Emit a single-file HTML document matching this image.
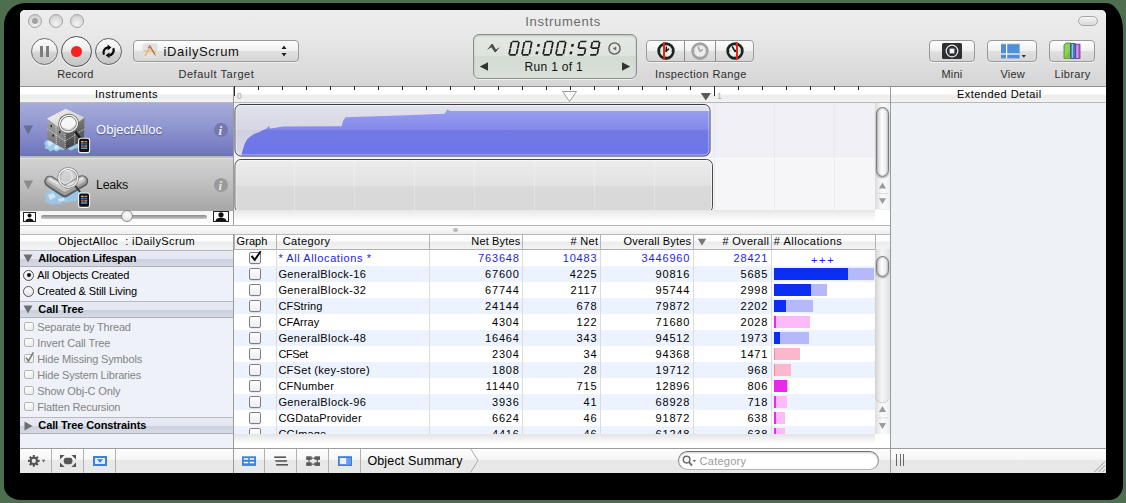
<!DOCTYPE html>
<html>
<head>
<meta charset="utf-8">
<title>Instruments</title>
<style>
html,body{margin:0;padding:0;}
body{width:1126px;height:503px;overflow:hidden;background:#4e6e50;font-family:"Liberation Sans",sans-serif;font-size:11px;color:#000;position:relative;}
.abs,.t,#pg,#pg div,#pg svg,#pg span{position:absolute;}
#shadow{left:4px;top:3px;width:1119px;height:497px;background:#000;border-radius:21px 17px 13px 17px / 22px 27px 15px 14px;}
#win{left:20px;top:10px;width:1086px;height:463px;background:#eef1f6;border-radius:5px 5px 0 0;overflow:hidden;}
#pg{left:-20px;top:-10px;width:1126px;height:503px;}
#tbar{left:20px;top:10px;width:1086px;height:76px;background:linear-gradient(#ededed 0%,#e9e9e9 30%,#e0e0e0 62%,#d5d5d5 100%);}
.t{white-space:nowrap;line-height:1;}
.lbl{font-size:11px;color:#2e2e2e;}
.tl{width:12px;height:12px;border-radius:50%;border:1px solid #a4a4a4;background:radial-gradient(circle at 50% 75%,#f4f4f4 0%,#dcdcdc 55%,#c4c4c4 100%);box-sizing:content-box;}
.rbtn{border-radius:50%;border:1px solid #6e6e6e;background:linear-gradient(#fdfdfd 0%,#ededed 45%,#d4d4d4 55%,#c6c6c6 100%);box-sizing:border-box;box-shadow:0 1px 0 rgba(255,255,255,.6);}
.sbtn{border:1px solid #9a9a9a;border-radius:4px;background:linear-gradient(#fefefe 0%,#f0f0f0 48%,#e0e0e0 52%,#d6d6d6 100%);box-sizing:border-box;box-shadow:0 1px 0 rgba(255,255,255,.55);}
.cb{width:12px;height:12px;border-radius:2px;border:1px solid #7e7e7e;box-sizing:border-box;background:linear-gradient(#ffffff,#ececec);box-shadow:0 1px 0 rgba(0,0,0,.08);}
.c,.n{font-size:11px;}
.n{letter-spacing:0.83px;}
</style>
</head>
<body>
<div id="shadow" class="abs"></div>
<div id="win" class="abs"><div id="pg">
  <div id="tbar"></div>
  <!-- traffic lights -->
  <div class="tl" style="left:28px;top:14px;"></div>
  <div style="left:32px;top:18px;width:6px;height:6px;border-radius:50%;background:#a2a2a2;"></div>
  <div class="tl" style="left:49px;top:14px;"></div>
  <div class="tl" style="left:70px;top:14px;"></div>
  <div class="t" style="left:525.2px;top:15px;font-size:13px;color:#6a6a6a;letter-spacing:0.72px;">Instruments</div>
  <div style="left:1078px;top:16px;width:20px;height:10px;border-radius:5px;border:1px solid #a6a6a6;background:linear-gradient(#f6f6f6,#d8d8d8);box-sizing:border-box;"></div>

  <!-- round buttons -->
  <div class="rbtn" style="left:31px;top:38px;width:27px;height:27px;"></div>
  <div style="left:40px;top:46px;width:3px;height:11px;background:#7e7e7e;"></div>
  <div style="left:46px;top:46px;width:3px;height:11px;background:#7e7e7e;"></div>
  <div class="rbtn" style="left:61px;top:36px;width:31px;height:31px;border-color:#4e4e4e;"></div>
  <div style="left:71px;top:46px;width:11px;height:11px;border-radius:50%;background:#f3251c;"></div>
  <div class="rbtn" style="left:95px;top:38px;width:27px;height:27px;border-color:#5c5c5c;"></div>
  <svg style="left:100px;top:43px;" width="17" height="17" viewBox="100 43 17 17"><g fill="none" stroke="#0c0c0c" stroke-width="2.3"><path d="M103.9 54.6 A5.2 5.2 0 0 1 108 47.4"/><path d="M113.3 48.3 A5.2 5.2 0 0 1 109.2 55.4"/></g><path d="M107.6 44.6 L111.4 47.5 L107.6 50.4 Z" fill="#0c0c0c"/><path d="M109.5 52.4 L105.6 55.3 L109.5 58.2 Z" fill="#0c0c0c"/></svg>
  <div class="t lbl" style="left:57.3px;top:68.5px;letter-spacing:0.1px;">Record</div>

  <!-- popup -->
  <div class="sbtn" style="left:133px;top:40px;width:166px;height:22px;"></div>
  <div class="t" style="left:163.6px;top:45px;font-size:13px;color:#111;letter-spacing:0.6px;">iDailyScrum</div>
  <svg style="left:280px;top:45px;" width="8" height="12" viewBox="0 0 8 12"><path d="M4 0.5 L6.5 4 L1.5 4 Z M4 11.5 L6.5 8 L1.5 8 Z" fill="#222"/></svg>
  <div class="t lbl" style="left:178.4px;top:68.5px;letter-spacing:0.55px;">Default Target</div>
  <!-- timer -->
  <div style="left:473px;top:34px;width:164px;height:45px;border-radius:6px;border:1px solid #8c8f8c;box-sizing:border-box;background:linear-gradient(#e3e9e3 0%,#dde4dd 48%,#d3dbd3 50%,#d9e0d9 100%);box-shadow:inset 0 1px 2px rgba(0,0,0,.18),0 1px 0 rgba(255,255,255,.6);"></div>
  <svg style="left:504px;top:39px;" width="104" height="18" viewBox="0 0 104 18"><g transform="translate(7.7,2.5) skewX(-11.5)"><path d="M0.55 0.00L6.85 0.00M7.40 0.55L7.40 6.38M7.40 6.93L7.40 12.75M0.55 13.30L6.85 13.30M0.00 6.93L0.00 12.75M0.00 0.55L0.00 6.38M13.35 0.00L19.65 0.00M20.20 0.55L20.20 6.38M20.20 6.93L20.20 12.75M13.35 13.30L19.65 13.30M12.80 6.93L12.80 12.75M12.80 0.55L12.80 6.38M34.55 0.00L40.85 0.00M41.40 0.55L41.40 6.38M41.40 6.93L41.40 12.75M34.55 13.30L40.85 13.30M34.00 6.93L34.00 12.75M34.00 0.55L34.00 6.38M47.35 0.00L53.65 0.00M54.20 0.55L54.20 6.38M54.20 6.93L54.20 12.75M47.35 13.30L53.65 13.30M46.80 6.93L46.80 12.75M46.80 0.55L46.80 6.38M68.45 0.00L74.75 0.00M67.90 0.55L67.90 6.38M68.45 6.65L74.75 6.65M75.30 6.93L75.30 12.75M68.45 13.30L74.75 13.30M81.25 0.00L87.55 0.00M88.10 0.55L88.10 6.38M88.10 6.93L88.10 12.75M81.25 13.30L87.55 13.30M80.70 0.55L80.70 6.38M81.25 6.65L87.55 6.65" fill="none" stroke="#1c1c1c" stroke-width="1.7" stroke-linecap="butt"/><g fill="#1c1c1c"><rect x="26.30" y="2.6" width="2.5" height="2.6"/><rect x="26.30" y="10.1" width="2.5" height="2.6"/><rect x="60.30" y="2.6" width="2.5" height="2.6"/><rect x="60.30" y="10.1" width="2.5" height="2.6"/></g></g></svg>
  <svg style="left:486px;top:43px;" width="16" height="11" viewBox="486 43 16 11"><path d="M487 49.9 L491.5 44.1 L492.7 44.1 L495.9 49.4 L499.9 47 L495.7 52.3 L494.7 52.3 L491.4 47.2 Z" fill="#4a4d4a"/></svg>
  <svg style="left:607px;top:41px;" width="15" height="15" viewBox="0 0 15 15"><circle cx="7.5" cy="7.5" r="5.6" fill="none" stroke="#555" stroke-width="1.3"/><path d="M9.2 5.6 L9.2 9.6 L5.8 7.6 Z" fill="#666"/></svg>
  <svg style="left:479px;top:62px;" width="10" height="9" viewBox="0 0 10 9"><path d="M9 0.3 L9 8.7 L0.8 4.5 Z" fill="#333"/></svg>
  <svg style="left:621px;top:62px;" width="10" height="9" viewBox="0 0 10 9"><path d="M1 0.3 L1 8.7 L9.2 4.5 Z" fill="#333"/></svg>
  <div class="t" style="left:524.5px;top:60.5px;font-size:12px;color:#111;letter-spacing:0.32px;">Run 1 of 1</div>

  <!-- inspection range -->
  <div class="sbtn" style="left:646px;top:40px;width:108px;height:22px;"></div>
  <div style="left:684px;top:41px;width:1px;height:20px;background:#8e8e8e;"></div>
  <div style="left:715px;top:41px;width:1px;height:20px;background:#8e8e8e;"></div>
  <svg style="left:656px;top:41px;" width="20" height="20" viewBox="0 0 20 20"><circle cx="10" cy="10.4" r="8.2" fill="rgba(0,0,0,.12)"/><circle cx="10" cy="10" r="7.4" fill="#eef0ee" stroke="#1c261e" stroke-width="2.6"/><rect x="9.5" y="4.2" width="1" height="1" fill="#555"/><rect x="9.5" y="14.8" width="1" height="1" fill="#555"/><rect x="4.2" y="9.5" width="1" height="1" fill="#555"/><rect x="14.8" y="9.5" width="1" height="1" fill="#555"/><path d="M10 10.4 L12.6 8 M10 10.4 L10.4 6.2" stroke="#111" stroke-width="1.5" fill="none" stroke-linecap="round"/><rect x="7" y="1.2" width="2" height="17.6" fill="#f02010"/></svg>
  <svg style="left:690px;top:41px;" width="20" height="20" viewBox="0 0 20 20"><circle cx="10" cy="10.4" r="8.2" fill="rgba(0,0,0,.12)"/><circle cx="10" cy="10" r="7.4" fill="#ececec" stroke="#a2a2a2" stroke-width="2.6"/><rect x="9.5" y="4.2" width="1" height="1" fill="#bbb"/><rect x="9.5" y="14.8" width="1" height="1" fill="#bbb"/><rect x="4.2" y="9.5" width="1" height="1" fill="#bbb"/><rect x="14.8" y="9.5" width="1" height="1" fill="#bbb"/><path d="M10 10.4 L8.2 6 M10 10.4 L12.4 8.6" stroke="#a8a8a8" stroke-width="1.5" fill="none" stroke-linecap="round"/></svg>
  <svg style="left:725px;top:41px;" width="20" height="20" viewBox="0 0 20 20"><circle cx="10" cy="10.4" r="8.2" fill="rgba(0,0,0,.12)"/><circle cx="10" cy="10" r="7.4" fill="#eef0ee" stroke="#1c261e" stroke-width="2.6"/><rect x="9.5" y="4.2" width="1" height="1" fill="#555"/><rect x="9.5" y="14.8" width="1" height="1" fill="#555"/><rect x="4.2" y="9.5" width="1" height="1" fill="#555"/><rect x="14.8" y="9.5" width="1" height="1" fill="#555"/><path d="M10 10.4 L7.4 5.8 M10 10.4 L11.8 8.8" stroke="#111" stroke-width="1.5" fill="none" stroke-linecap="round"/><rect x="11" y="1.2" width="2" height="17.6" fill="#f02010"/></svg>
  <div class="t lbl" style="left:655px;top:68.5px;letter-spacing:0.38px;">Inspection Range</div>

  <!-- right buttons -->
  <div class="sbtn" style="left:929px;top:40px;width:46px;height:22px;"></div>
  <svg style="left:942px;top:43px;" width="20" height="16" viewBox="0 0 20 16"><rect x="0" y="0" width="20" height="16" rx="1.5" fill="#2d2f31"/><circle cx="10" cy="8" r="5.8" fill="none" stroke="#e4e4e4" stroke-width="1.3"/><rect x="7.6" y="5.6" width="4.8" height="4.8" fill="#f2f2f2"/></svg>
  <div class="sbtn" style="left:987px;top:40px;width:50px;height:22px;"></div>
  <svg style="left:1001px;top:43px;" width="28" height="16" viewBox="0 0 28 16"><rect x="0" y="0" width="18.6" height="15.4" fill="#4f8fd6"/><rect x="0" y="0" width="18.6" height="1.2" fill="#d8e4f0"/><rect x="5" y="1" width="1.2" height="14.4" fill="#fff"/><rect x="0" y="10.4" width="18.6" height="1.2" fill="#fff"/><path d="M20.6 12 L25 12 L22.8 14.8 Z" fill="#333"/></svg>
  <div class="sbtn" style="left:1049px;top:40px;width:46px;height:22px;"></div>
  <svg style="left:1063px;top:42px;" width="18" height="17" viewBox="0 0 18 17"><path d="M1 3 L3 1 L7.5 1 L7.5 16.5 L1 16.5 Z" fill="#8fd05a" stroke="#4f7a3a" stroke-width="0.8"/><path d="M1.2 16.4 L7.4 8 L7.4 16.4 Z" fill="#7ac14a"/><rect x="7.8" y="1.6" width="4.4" height="14.9" fill="#3f87c8" stroke="#2a4f7a" stroke-width="0.8"/><rect x="8.8" y="2" width="1.2" height="14" fill="#8cc4ee"/><rect x="12.6" y="2.2" width="4.4" height="14.3" fill="#b868d8" stroke="#6a3a86" stroke-width="0.8"/><rect x="13.6" y="3" width="1.2" height="13" fill="#e0a8f2"/></svg>
  <div class="t lbl" style="left:941.5px;top:68.5px;letter-spacing:0.2px;">Mini</div>
  <div class="t lbl" style="left:1000.5px;top:68.5px;letter-spacing:0.2px;">View</div>
  <div class="t lbl" style="left:1054.5px;top:68.5px;letter-spacing:0.34px;">Library</div>
  <div style="left:20px;top:86px;width:1086px;height:1px;background:#909090;"></div>
  <!-- header row -->
  <div style="left:20px;top:87px;width:1086px;height:16px;background:linear-gradient(#ffffff 0%,#ffffff 42%,#ececec 54%,#f4f4f4 100%);"></div>
  <div style="left:20px;top:102px;width:1086px;height:1px;background:#b8b8b8;"></div>
  <div class="t" style="left:95px;top:88.5px;font-size:11px;letter-spacing:0.5px;">Instruments</div>
  <div class="t" style="left:957px;top:88.5px;font-size:11px;letter-spacing:0.46px;">Extended Detail</div>
  <!-- instrument rows -->
  <div style="left:20px;top:103px;width:214px;height:53px;background:linear-gradient(#a6acda 0%,#959bd2 35%,#8086c7 70%,#6c73bb 100%);"></div>
  <div style="left:20px;top:156px;width:214px;height:1.5px;background:#bcbcc4;"></div><div style="left:20px;top:157.5px;width:214px;height:1.5px;background:#e2e2e2;"></div>
  <div style="left:20px;top:159px;width:214px;height:52px;background:linear-gradient(#d2d2d2 0%,#c3c3c3 40%,#b2b2b2 75%,#a6a6a6 100%);"></div>
  <div style="left:20px;top:211px;width:214px;height:14px;background:linear-gradient(#f4f4f4,#ffffff);"></div>
  <svg style="left:23px;top:125px;" width="11" height="10" viewBox="0 0 11 10"><path d="M0.5 0.5 L10 0.5 L5.2 9.5 Z" fill="#666c92"/></svg>
  <svg style="left:23px;top:180px;" width="11" height="10" viewBox="0 0 11 10"><path d="M0.5 0.5 L10 0.5 L5.2 9.5 Z" fill="#8c8c8c"/></svg>
  <div class="t" style="left:96px;top:123px;font-size:13px;color:#fff;letter-spacing:0.03px;text-shadow:0 1px 1px rgba(40,40,90,.6);">ObjectAlloc</div>
  <div class="t" style="left:96px;top:179px;font-size:12.5px;color:#111;letter-spacing:-0.3px;">Leaks</div>
  <div style="left:214px;top:123px;width:14px;height:14px;border-radius:50%;background:#7478aa;"></div>
  <div class="t" style="left:218.5px;top:123.5px;font-family:'Liberation Serif',serif;font-style:italic;font-weight:bold;font-size:13px;color:#e8e9f6;">i</div>
  <div style="left:214px;top:178px;width:14px;height:14px;border-radius:50%;background:#9a9a9a;"></div>
  <div class="t" style="left:218.5px;top:178.5px;font-family:'Liberation Serif',serif;font-style:italic;font-weight:bold;font-size:13px;color:#e6e6e6;">i</div>
  <!-- ObjectAlloc icon -->
  <svg style="left:42px;top:105px;" width="52" height="50" viewBox="42 105 52 50">
    <defs>
      <linearGradient id="cl" x1="0" y1="0" x2="0" y2="1"><stop offset="0" stop-color="#a8a8a8"/><stop offset="1" stop-color="#6a6a6a"/></linearGradient>
      <linearGradient id="cr" x1="0" y1="0" x2="0" y2="1"><stop offset="0" stop-color="#7c7c7c"/><stop offset="1" stop-color="#3e3e3e"/></linearGradient>
      <linearGradient id="ct" x1="0" y1="0" x2="1" y2="1"><stop offset="0" stop-color="#f4f4f4"/><stop offset="1" stop-color="#c4c4c4"/></linearGradient>
    </defs>
    <path d="M45.5 141 L44 143.5 L45.6 146 L44.6 148.4 L48 149 L50 151.4 L53.6 150 L57 151.6 L60 149.6 L64 150 L63 142 L52 136.6 L49.4 139 Z" fill="#9ccbea"/>
    <path d="M47 142 L51 140 L53 144 L49 146.5 Z M54 146 L58 145 L59 148.6 L55 149.2 Z" fill="#d2eafa"/>
    <path d="M67 148.6 L71 150.4 L75 148.4 L79 148 L81 144 L74 141 Z" fill="#9ccbea"/>
    <path d="M47 118.5 L65.2 131.9 L65.2 149.6 L47.5 139.4 Z" fill="url(#cl)"/>
    <path d="M65.2 131.9 L84.5 117.4 L84 140.5 L65.2 149.6 Z" fill="url(#cr)"/>
    <path d="M65.8 108.8 L84.5 117.4 L65.2 131.9 L47 118.5 Z" fill="url(#ct)"/>
    <path d="M56 113.5 L75 124.5 M75 113 L56 125 M47.2 129 L65.2 141 L84.2 129 M56 125 L56.3 144.5 M75 124.5 L74.8 145 M65.2 131.9 L65.2 149.6" stroke="#e0e0e0" stroke-width="0.8" fill="none" stroke-dasharray="1.2 0.8"/>
    <rect x="50.6" y="125" width="1.4" height="2.2" fill="#222"/><rect x="59" y="131" width="1.4" height="2.2" fill="#222"/><rect x="52.6" y="134.4" width="1.4" height="2.2" fill="#222"/>
    <ellipse cx="68.5" cy="123.6" rx="9" ry="8.2" fill="rgba(252,252,252,.82)" stroke="#555" stroke-width="2.8" transform="rotate(-20 68.5 123.6)"/>
    <ellipse cx="68.5" cy="123.6" rx="9" ry="8.2" fill="none" stroke="#ececec" stroke-width="1.6" transform="rotate(-20 68.5 123.6)"/>
    <path d="M62 127 C66 132 72 131 75 126 L70 130 Z" fill="rgba(120,120,120,.35)"/>
    <path d="M75 131.5 L80.5 138.5" stroke="#1a1a1a" stroke-width="2.4"/>
    <rect x="78.6" y="138.2" width="11" height="14.4" rx="2.2" fill="#101010" stroke="#f2f2f2" stroke-width="1.1"/>
    <rect x="80.8" y="140.6" width="6.6" height="8.6" fill="#1e2a3a"/>
    <g><rect x="81" y="141.0" width="2.6" height="1.3" fill="#e8c050"/><rect x="84.4" y="141.0" width="2.8" height="1.3" fill="#e07840"/><rect x="81" y="143.2" width="2.6" height="1.3" fill="#4a80d0"/><rect x="84.4" y="143.2" width="2.8" height="1.3" fill="#3a68b8"/><rect x="81" y="145.39999999999998" width="2.6" height="1.3" fill="#d86a48"/><rect x="84.4" y="145.39999999999998" width="2.8" height="1.3" fill="#c8a048"/><rect x="81" y="147.6" width="6.2" height="1.2" fill="#58b8e0"/></g>
  </svg>
  <!-- Leaks icon -->
  <svg style="left:42px;top:160px;" width="52" height="50" viewBox="42 160 52 50">
    <defs>
      <linearGradient id="pp" x1="0" y1="0" x2="0" y2="1"><stop offset="0" stop-color="#e2e2e2"/><stop offset="0.5" stop-color="#a8a8a8"/><stop offset="1" stop-color="#6e6e6e"/></linearGradient>
    </defs>
    <path d="M46 193 L44.4 196 L46 199 L45 202 L49 203 L52 205 L56 203.6 L60 204.6 L63 202 L68 202.6 L72 201 L77 201 L80 197 L81 191 L70 188 L52 188 Z" fill="#9cc6e6"/>
    <path d="M48 195 L53 193 L56 197 L50 200 Z M58 199 L64 197.6 L65 200.6 L59 201.6 Z" fill="#d0e6f6"/>
    <path d="M50 181.5 L64.7 191.5 L82.4 181" stroke="#5e5e5e" stroke-width="11.6" fill="none" stroke-linecap="round" stroke-linejoin="round"/>
    <path d="M50 181 L64.7 190.6 L82.4 180.5" stroke="#9c9c9c" stroke-width="9" fill="none" stroke-linecap="round" stroke-linejoin="round"/>
    <path d="M50 180 L64.7 189 L82.4 179.5" stroke="#c6c6c6" stroke-width="5.4" fill="none" stroke-linecap="round" stroke-linejoin="round"/>
    <path d="M50 179 L64.7 187.6 L82.4 178.6" stroke="#e6e6e6" stroke-width="2.2" fill="none" stroke-linecap="round" stroke-linejoin="round"/>
    <circle cx="68.2" cy="177.9" r="9.4" fill="rgba(235,235,235,.3)" stroke="#7c7c7c" stroke-width="2.6"/>
    <circle cx="68.2" cy="177.9" r="9.4" fill="none" stroke="#f0f0f0" stroke-width="1.4"/>
    <circle cx="65.6" cy="176.6" r="6.6" fill="none" stroke="rgba(255,255,255,.6)" stroke-width="1"/>
    <path d="M75.5 186 L80 192" stroke="#3a3a3a" stroke-width="2"/>
    <rect x="78.6" y="193" width="11" height="14.4" rx="2.2" fill="#101010" stroke="#f2f2f2" stroke-width="1.1"/>
    <rect x="80.8" y="195.4" width="6.6" height="8.6" fill="#1e2a3a"/>
    <g><rect x="81" y="195.8" width="2.6" height="1.3" fill="#e8c050"/><rect x="84.4" y="195.8" width="2.8" height="1.3" fill="#e07840"/><rect x="81" y="198" width="2.6" height="1.3" fill="#4a80d0"/><rect x="84.4" y="198" width="2.8" height="1.3" fill="#3a68b8"/><rect x="81" y="200.2" width="2.6" height="1.3" fill="#d86a48"/><rect x="84.4" y="200.2" width="2.8" height="1.3" fill="#c8a048"/><rect x="81" y="202.4" width="6.2" height="1.2" fill="#58b8e0"/></g>
  </svg>
  <!-- slider row -->
  <div style="left:23px;top:212px;width:13px;height:10px;background:#fff;border:1px solid #222;box-sizing:border-box;"></div>
  <svg style="left:24px;top:213px;" width="11" height="8" viewBox="0 0 11 8"><circle cx="5.5" cy="2.4" r="2" fill="#111"/><path d="M1.5 8 C1.5 4.5 9.5 4.5 9.5 8 Z" fill="#111"/></svg>
  <div style="left:41px;top:215px;width:166px;height:4px;border-radius:2px;background:linear-gradient(#8a8a8a,#c8c8c8);"></div>
  <div style="left:121px;top:210px;width:12px;height:12px;border-radius:50%;border:1px solid #8a8a8a;box-sizing:border-box;background:radial-gradient(circle at 50% 35%,#fff,#dcdcdc);"></div>
  <div style="left:213px;top:211px;width:16px;height:11px;background:#fff;border:1px solid #222;box-sizing:border-box;"></div>
  <svg style="left:214px;top:212px;" width="14" height="9" viewBox="0 0 14 9"><circle cx="7" cy="2.8" r="2.6" fill="#111"/><path d="M1.5 9 C1.5 4.5 12.5 4.5 12.5 9 Z" fill="#111"/></svg>
  <!-- vertical divider left/right of track area -->
  
  <!-- ruler -->
  <svg style="left:0;top:0;" width="1126" height="104" viewBox="0 0 1126 104"><rect x="234" y="86" width="1" height="10" fill="#2a2a2a"/><rect x="258" y="86" width="1" height="4" fill="#2a2a2a"/><rect x="282" y="86" width="1" height="4" fill="#2a2a2a"/><rect x="306" y="86" width="1" height="4" fill="#2a2a2a"/><rect x="330" y="86" width="1" height="4" fill="#2a2a2a"/><rect x="354" y="86" width="1" height="4" fill="#2a2a2a"/><rect x="378" y="86" width="1" height="4" fill="#2a2a2a"/><rect x="402" y="86" width="1" height="4" fill="#2a2a2a"/><rect x="426" y="86" width="1" height="4" fill="#2a2a2a"/><rect x="450" y="86" width="1" height="4" fill="#2a2a2a"/><rect x="474" y="86" width="1" height="4" fill="#2a2a2a"/><rect x="498" y="86" width="1" height="4" fill="#2a2a2a"/><rect x="522" y="86" width="1" height="4" fill="#2a2a2a"/><rect x="546" y="86" width="1" height="4" fill="#2a2a2a"/><rect x="570" y="86" width="1" height="4" fill="#2a2a2a"/><rect x="594" y="86" width="1" height="4" fill="#2a2a2a"/><rect x="618" y="86" width="1" height="4" fill="#2a2a2a"/><rect x="642" y="86" width="1" height="4" fill="#2a2a2a"/><rect x="666" y="86" width="1" height="4" fill="#2a2a2a"/><rect x="690" y="86" width="1" height="4" fill="#2a2a2a"/><rect x="714" y="86" width="1" height="10" fill="#2a2a2a"/><rect x="738" y="86" width="1" height="4" fill="#2a2a2a"/><rect x="762" y="86" width="1" height="4" fill="#2a2a2a"/><rect x="786" y="86" width="1" height="4" fill="#2a2a2a"/><rect x="810" y="86" width="1" height="4" fill="#2a2a2a"/><rect x="834" y="86" width="1" height="4" fill="#2a2a2a"/><rect x="858" y="86" width="1" height="4" fill="#2a2a2a"/>
    <path d="M562.5 91.5 L576.5 91.5 L569.5 101.5 Z" fill="#fff" stroke="#9a9a9a" stroke-width="1"/>
    <path d="M700.8 93 L710.9 93 L705.8 100.6 Z" fill="#5a5a5a"/>
  </svg>
  <div class="t" style="left:237px;top:91.5px;font-size:8.5px;color:#a8a8a8;">0</div>
  <div class="t" style="left:717px;top:91.5px;font-size:8.5px;color:#a8b4b8;">1</div>
  <!-- track area -->
  <div style="left:234px;top:103px;width:641px;height:107px;background:#f2f0f7;"></div>
  <div style="left:234px;top:157.5px;width:641px;height:1.5px;background:#fbfafc;"></div>
  <div style="left:234px;top:159px;width:641px;height:51px;background:#f6f5f8;"></div>
  <div style="left:234px;top:210px;width:656px;height:15px;background:#fff;"></div><div style="left:234px;top:210px;width:641px;height:15px;background:linear-gradient(#e6e6e6,#ffffff 75%);"></div>
  <div style="left:714px;top:103px;width:1px;height:107px;background:#eceaf0;"></div><div style="left:774px;top:103px;width:1px;height:107px;background:#eceaf0;"></div>
  <div style="left:834px;top:103px;width:1px;height:107px;background:#eceaf0;"></div>
  <!-- track 1 -->
  <svg style="left:232px;top:102px;" width="482" height="58" viewBox="232 102 482 58">
    <defs>
      <clipPath id="c1"><rect x="235" y="104.5" width="475" height="51.5" rx="6"/></clipPath>
      <linearGradient id="bg1" x1="0" y1="0" x2="0" y2="1"><stop offset="0" stop-color="#e3e3ee"/><stop offset="0.49" stop-color="#d6d6e4"/><stop offset="0.5" stop-color="#cfcfe0"/><stop offset="1" stop-color="#d8d8ea"/></linearGradient>
      <linearGradient id="f1" x1="0" y1="104" x2="0" y2="156" gradientUnits="userSpaceOnUse"><stop offset="0" stop-color="#a0a5f2"/><stop offset="0.49" stop-color="#8389ea"/><stop offset="0.5" stop-color="#737ae4"/><stop offset="1" stop-color="#6b75ea"/></linearGradient>
    </defs>
    <rect x="235" y="104.5" width="475" height="51.5" rx="6" fill="url(#bg1)"/>
    <g clip-path="url(#c1)">
      <path d="M241.5 156 L241.8 153 L244.4 144.4 L247 139.6 L250 136.7 L254 134 L258.9 132.2 L263 130 L266.7 128.4 L268.9 126 L270 128.4 L274 128 L283.3 126.4 L341.7 126.2 L343 121 L345.5 117.3 L360 116.8 L400 115.4 L444.3 113.8 L447.6 109.3 L450 111.1 L711 111 L711 157 L241.5 157 Z" fill="url(#f1)"/>
    </g>
    <rect x="235" y="104.5" width="475" height="51.5" rx="6" fill="none" stroke="#3c3c44" stroke-width="1"/>
    <rect x="236" y="105.5" width="473" height="49.5" rx="5" fill="none" stroke="rgba(255,255,255,.55)" stroke-width="1"/>
  </svg>
  <!-- track 2 -->
  <svg style="left:232px;top:157px;" width="486" height="53" viewBox="232 157 486 53">
    <defs>
      <linearGradient id="bg2" x1="0" y1="0" x2="0" y2="1"><stop offset="0" stop-color="#ececec"/><stop offset="0.49" stop-color="#e2e2e2"/><stop offset="0.5" stop-color="#dadada"/><stop offset="1" stop-color="#d8d8d8"/></linearGradient>
    </defs>
    <rect x="235" y="159.5" width="477.5" height="53" rx="6" fill="url(#bg2)" stroke="#4a4a4a" stroke-width="1"/>
    <rect x="236" y="160.5" width="475.5" height="51" rx="5" fill="none" stroke="rgba(255,255,255,.6)" stroke-width="1"/>
    <path d="M294.5 161 V211 M354.5 161 V211 M414.5 161 V211 M474.5 161 V211 M534.5 161 V211 M594.5 161 V211 M654.5 161 V211" stroke="rgba(255,255,255,.25)" stroke-width="1"/>
  </svg>
  <!-- track scrollbar -->
  <div style="left:875px;top:103px;width:15px;height:106px;background:linear-gradient(90deg,#dcdcdc,#fbfbfb 50%,#f0f0f0);"></div>
  <div style="left:876px;top:107px;width:13px;height:69.5px;border-radius:7px;border:1px solid #7c7c7c;box-sizing:border-box;background:linear-gradient(90deg,#cfcfcf,#ffffff 45%,#e0e0e0);box-shadow:inset 0 0 2px rgba(0,0,0,.45),0 1px 2px rgba(0,0,0,.35);"></div>
  <svg style="left:877px;top:180px;" width="11" height="30" viewBox="0 0 11 30"><path d="M5.5 2.6 L9 8.4 L2 8.4 Z" fill="#9a9a9a"/><path d="M5.5 24 L9 18.2 L2 18.2 Z" fill="#9a9a9a"/><rect x="0" y="13" width="11" height="1" fill="#dcdcdc"/></svg>
  <div style="left:20px;top:225px;width:871px;height:1px;background:#b4b4b4;"></div>
  <div style="left:20px;top:226px;width:871px;height:8px;background:linear-gradient(#fafafa,#eeeeee);"></div>
  <div style="left:453px;top:228px;width:5px;height:4px;border-radius:50%;background:#b8b8b8;"></div>
  <!-- detail divider -->
  
  <!-- table -->
  <div style="left:234px;top:249px;width:656px;height:199px;background:#fff;"></div>
  <div id="tbody" style="left:234px;top:249px;width:641px;height:185px;overflow:hidden;"><div style="left:-234px;top:-248px;width:1126px;height:503px;">
<div class="cb" style="left:249px;top:251px;"></div>
<svg style="left:248px;top:247px;" width="16" height="16" viewBox="0 0 16 16"><path d="M3.5 7.9 L6.7 11.9 L12.7 3.3" fill="none" stroke="#0a0a0a" stroke-width="2" stroke-linejoin="miter"/></svg>
<div class="t c" style="left:278.4px;top:251.5px;color:#1c1cee;letter-spacing:0.59px;">* All Allocations *</div>
<div class="t n" style="right:606.27px;top:251.5px;color:#1c1cee;">763648</div>
<div class="t n" style="right:528.57px;top:251.5px;color:#1c1cee;">10483</div>
<div class="t n" style="right:435.77px;top:251.5px;color:#1c1cee;">3446960</div>
<div class="t n" style="right:357.77px;top:251.5px;color:#1c1cee;">28421</div>
<div class="t" style="left:811px;top:253.5px;color:#1c1cee;font-size:11px;letter-spacing:1.7px;">+++</div>
<div style="left:234px;top:265px;width:641px;height:16px;background:#edf3fe;"></div>
<div class="cb" style="left:249px;top:267px;"></div>
<div class="t c" style="left:278.4px;top:267.5px;color:#000;letter-spacing:0.4px;">GeneralBlock-16</div>
<div class="t n" style="right:606.27px;top:267.5px;color:#000;">67600</div>
<div class="t n" style="right:528.57px;top:267.5px;color:#000;">4225</div>
<div class="t n" style="right:435.77px;top:267.5px;color:#000;">90816</div>
<div class="t n" style="right:357.77px;top:267.5px;color:#000;">5685</div>
<div style="left:774px;top:267px;width:100.0px;height:12px;background:#b5b8fa;"></div>
<div style="left:774px;top:267px;width:74.3px;height:12px;background:#0a2ef4;"></div>
<div class="cb" style="left:249px;top:283px;"></div>
<div class="t c" style="left:278.4px;top:283.5px;color:#000;letter-spacing:0.4px;">GeneralBlock-32</div>
<div class="t n" style="right:606.27px;top:283.5px;color:#000;">67744</div>
<div class="t n" style="right:528.57px;top:283.5px;color:#000;">2117</div>
<div class="t n" style="right:435.77px;top:283.5px;color:#000;">95744</div>
<div class="t n" style="right:357.77px;top:283.5px;color:#000;">2998</div>
<div style="left:774px;top:283px;width:52.8px;height:12px;background:#b5b8fa;"></div>
<div style="left:774px;top:283px;width:37.3px;height:12px;background:#0a2ef4;"></div>
<div style="left:234px;top:297px;width:641px;height:16px;background:#edf3fe;"></div>
<div class="cb" style="left:249px;top:299px;"></div>
<div class="t c" style="left:278.4px;top:299.5px;color:#000;letter-spacing:0.07px;">CFString</div>
<div class="t n" style="right:606.27px;top:299.5px;color:#000;">24144</div>
<div class="t n" style="right:528.57px;top:299.5px;color:#000;">678</div>
<div class="t n" style="right:435.77px;top:299.5px;color:#000;">79872</div>
<div class="t n" style="right:357.77px;top:299.5px;color:#000;">2202</div>
<div style="left:774px;top:299px;width:39.0px;height:12px;background:#b5b8fa;"></div>
<div style="left:774px;top:299px;width:12.0px;height:12px;background:#0a2ef4;"></div>
<div class="cb" style="left:249px;top:315px;"></div>
<div class="t c" style="left:278.4px;top:315.5px;color:#000;letter-spacing:0.09px;">CFArray</div>
<div class="t n" style="right:606.27px;top:315.5px;color:#000;">4304</div>
<div class="t n" style="right:528.57px;top:315.5px;color:#000;">122</div>
<div class="t n" style="right:435.77px;top:315.5px;color:#000;">71680</div>
<div class="t n" style="right:357.77px;top:315.5px;color:#000;">2028</div>
<div style="left:774px;top:315px;width:35.7px;height:12px;background:#fdb9f8;"></div>
<div style="left:774px;top:315px;width:2.0px;height:12px;background:#ea28ea;"></div>
<div style="left:234px;top:329px;width:641px;height:16px;background:#edf3fe;"></div>
<div class="cb" style="left:249px;top:331px;"></div>
<div class="t c" style="left:278.4px;top:331.5px;color:#000;letter-spacing:0.4px;">GeneralBlock-48</div>
<div class="t n" style="right:606.27px;top:331.5px;color:#000;">16464</div>
<div class="t n" style="right:528.57px;top:331.5px;color:#000;">343</div>
<div class="t n" style="right:435.77px;top:331.5px;color:#000;">94512</div>
<div class="t n" style="right:357.77px;top:331.5px;color:#000;">1973</div>
<div style="left:774px;top:331px;width:35.0px;height:12px;background:#b5b8fa;"></div>
<div style="left:774px;top:331px;width:6.0px;height:12px;background:#0a2ef4;"></div>
<div class="cb" style="left:249px;top:347px;"></div>
<div class="t c" style="left:278.4px;top:347.5px;color:#000;letter-spacing:-0.38px;">CFSet</div>
<div class="t n" style="right:606.27px;top:347.5px;color:#000;">2304</div>
<div class="t n" style="right:528.57px;top:347.5px;color:#000;">34</div>
<div class="t n" style="right:435.77px;top:347.5px;color:#000;">94368</div>
<div class="t n" style="right:357.77px;top:347.5px;color:#000;">1471</div>
<div style="left:774px;top:347px;width:26.0px;height:12px;background:#fbb8cc;"></div>
<div style="left:774px;top:347px;width:1.0px;height:12px;background:#f088a8;"></div>
<div style="left:234px;top:361px;width:641px;height:16px;background:#edf3fe;"></div>
<div class="cb" style="left:249px;top:363px;"></div>
<div class="t c" style="left:278.4px;top:363.5px;color:#000;letter-spacing:0.28px;">CFSet (key-store)</div>
<div class="t n" style="right:606.27px;top:363.5px;color:#000;">1808</div>
<div class="t n" style="right:528.57px;top:363.5px;color:#000;">28</div>
<div class="t n" style="right:435.77px;top:363.5px;color:#000;">19712</div>
<div class="t n" style="right:357.77px;top:363.5px;color:#000;">968</div>
<div style="left:774px;top:363px;width:17.0px;height:12px;background:#fbb8cc;"></div>
<div style="left:774px;top:363px;width:1.0px;height:12px;background:#f088a8;"></div>
<div class="cb" style="left:249px;top:379px;"></div>
<div class="t c" style="left:278.4px;top:379.5px;color:#000;letter-spacing:0.24px;">CFNumber</div>
<div class="t n" style="right:606.27px;top:379.5px;color:#000;">11440</div>
<div class="t n" style="right:528.57px;top:379.5px;color:#000;">715</div>
<div class="t n" style="right:435.77px;top:379.5px;color:#000;">12896</div>
<div class="t n" style="right:357.77px;top:379.5px;color:#000;">806</div>
<div style="left:774px;top:379px;width:14.0px;height:12px;background:#fdb9f8;"></div>
<div style="left:774px;top:379px;width:12.6px;height:12px;background:#ea28ea;"></div>
<div style="left:234px;top:393px;width:641px;height:16px;background:#edf3fe;"></div>
<div class="cb" style="left:249px;top:395px;"></div>
<div class="t c" style="left:278.4px;top:395.5px;color:#000;letter-spacing:0.4px;">GeneralBlock-96</div>
<div class="t n" style="right:606.27px;top:395.5px;color:#000;">3936</div>
<div class="t n" style="right:528.57px;top:395.5px;color:#000;">41</div>
<div class="t n" style="right:435.77px;top:395.5px;color:#000;">68928</div>
<div class="t n" style="right:357.77px;top:395.5px;color:#000;">718</div>
<div style="left:774px;top:395px;width:12.6px;height:12px;background:#fdb9f8;"></div>
<div style="left:774px;top:395px;width:1.5px;height:12px;background:#ea28ea;"></div>
<div class="cb" style="left:249px;top:411px;"></div>
<div class="t c" style="left:278.4px;top:411.5px;color:#000;letter-spacing:0.19px;">CGDataProvider</div>
<div class="t n" style="right:606.27px;top:411.5px;color:#000;">6624</div>
<div class="t n" style="right:528.57px;top:411.5px;color:#000;">46</div>
<div class="t n" style="right:435.77px;top:411.5px;color:#000;">91872</div>
<div class="t n" style="right:357.77px;top:411.5px;color:#000;">638</div>
<div style="left:774px;top:411px;width:11.0px;height:12px;background:#fdb9f8;"></div>
<div style="left:774px;top:411px;width:1.5px;height:12px;background:#ea28ea;"></div>
<div style="left:234px;top:425px;width:641px;height:16px;background:#edf3fe;"></div>
<div class="cb" style="left:249px;top:427px;"></div>
<div class="t c" style="left:278.4px;top:427.5px;color:#000;letter-spacing:0.1px;">CGImage</div>
<div class="t n" style="right:606.27px;top:427.5px;color:#000;">4416</div>
<div class="t n" style="right:528.57px;top:427.5px;color:#000;">46</div>
<div class="t n" style="right:435.77px;top:427.5px;color:#000;">61248</div>
<div class="t n" style="right:357.77px;top:427.5px;color:#000;">638</div>
<div style="left:774px;top:427px;width:11.0px;height:12px;background:#fdb9f8;"></div>
<div style="left:774px;top:427px;width:1.5px;height:12px;background:#ea28ea;"></div>
<div style="left:276px;top:249px;width:1px;height:185px;background:#dcdcdc;"></div>
<div style="left:429px;top:249px;width:1px;height:185px;background:#dcdcdc;"></div>
<div style="left:522px;top:249px;width:1px;height:185px;background:#dcdcdc;"></div>
<div style="left:600px;top:249px;width:1px;height:185px;background:#dcdcdc;"></div>
<div style="left:693px;top:249px;width:1px;height:185px;background:#dcdcdc;"></div>
<div style="left:771px;top:249px;width:1px;height:185px;background:#dcdcdc;"></div>
</div></div>
  <div style="left:20px;top:234px;width:871px;height:15px;background:linear-gradient(#ffffff 0%,#fdfdfd 45%,#ececec 55%,#f3f3f3 100%);"></div>
  <div style="left:20px;top:233.5px;width:871px;height:1px;background:#b8b8b8;"></div>
  <div style="left:20px;top:248.5px;width:871px;height:1px;background:#b0b0b0;"></div>
<div style="left:233.5px;top:234px;width:1px;height:15px;background:#b4b4b4;"></div>
<div style="left:276px;top:234px;width:1px;height:15px;background:#b4b4b4;"></div>
<div style="left:429px;top:234px;width:1px;height:15px;background:#b4b4b4;"></div>
<div style="left:522px;top:234px;width:1px;height:15px;background:#b4b4b4;"></div>
<div style="left:600px;top:234px;width:1px;height:15px;background:#b4b4b4;"></div>
<div style="left:693px;top:234px;width:1px;height:15px;background:#b4b4b4;"></div>
<div style="left:771px;top:234px;width:1px;height:15px;background:#b4b4b4;"></div>
<div style="left:874.5px;top:234px;width:1px;height:15px;background:#b4b4b4;"></div>
<div class="t" style="left:236.5px;top:236px;font-size:11px;letter-spacing:0.08px;">Graph</div>
<div class="t" style="left:282.8px;top:236px;font-size:11px;letter-spacing:0.36px;">Category</div>
<div class="t" style="left:471.3px;top:236px;font-size:11px;letter-spacing:0.15px;">Net Bytes</div>
<div class="t" style="left:570.6px;top:236px;font-size:11px;letter-spacing:0.28px;"># Net</div>
<div class="t" style="left:623.6px;top:236px;font-size:11px;letter-spacing:0.16px;">Overall Bytes</div>
<div class="t" style="left:722.5px;top:236px;font-size:11px;letter-spacing:0.29px;"># Overall</div>
<div class="t" style="left:773.8px;top:236px;font-size:11px;letter-spacing:0.52px;"># Allocations</div>
<svg style="left:697px;top:238px;" width="10" height="8" viewBox="0 0 10 8"><path d="M0.8 0.8 L9.2 0.8 L5 7.6 Z" fill="#777"/></svg>
  <div class="t" style="left:58.2px;top:236px;font-size:11px;letter-spacing:0.4px;white-space:pre;">ObjectAlloc  : iDailyScrum</div>
  <div style="left:875px;top:249px;width:15px;height:185px;background:linear-gradient(90deg,#dedede,#fbfbfb 50%,#eeeeee);"></div>
  <div style="left:875px;top:249px;width:15px;height:153px;border-radius:0 0 7.5px 7.5px;background:linear-gradient(90deg,#d2d2d2,#f6f6f6 45%,#e2e2e2);box-shadow:0 1px 1px rgba(0,0,0,.2);"></div>
  <div style="left:876px;top:256px;width:13px;height:21px;border-radius:7px;border:1px solid #7c7c7c;box-sizing:border-box;background:linear-gradient(90deg,#cfcfcf,#ffffff 45%,#e0e0e0);box-shadow:inset 0 0 2px rgba(0,0,0,.45),0 1px 2px rgba(0,0,0,.35);"></div>
  <svg style="left:877px;top:403px;" width="11" height="30" viewBox="0 0 11 30"><path d="M5.5 3 L9 9 L2 9 Z" fill="#9a9a9a"/><path d="M5.5 26 L9 20 L2 20 Z" fill="#9a9a9a"/><rect x="0" y="14.5" width="11" height="1" fill="#dcdcdc"/></svg>
  <div style="left:234px;top:434px;width:641px;height:14px;background:linear-gradient(#e4e4e4,#ffffff 70%);"></div>
  <!-- sidebar -->
  <div style="left:20px;top:249px;width:213.5px;height:199px;background:#eef1f7;"></div>
<div style="left:20px;top:249.5px;width:213.5px;height:17px;background:linear-gradient(#e7eaf3 0%,#e4e7f1 50%,#cbd0de 54%,#d6dae6 100%);border-top:1px solid #b9b9bd;border-bottom:1px solid #b0b0b4;box-sizing:border-box;"></div>
<svg style="left:23px;top:254.0px;" width="10" height="9" viewBox="0 0 10 9"><path d="M0.5 0.5 L9.5 0.5 L5 8.5 Z" fill="#6e6e6e"/></svg>
<div class="t" style="left:38.3px;top:252.5px;font-size:11px;font-weight:bold;letter-spacing:-0.18px;">Allocation Lifespan</div>
<div style="left:20px;top:300.5px;width:213.5px;height:17px;background:linear-gradient(#e7eaf3 0%,#e4e7f1 50%,#cbd0de 54%,#d6dae6 100%);border-top:1px solid #b9b9bd;border-bottom:1px solid #b0b0b4;box-sizing:border-box;"></div>
<svg style="left:23px;top:305.0px;" width="10" height="9" viewBox="0 0 10 9"><path d="M0.5 0.5 L9.5 0.5 L5 8.5 Z" fill="#6e6e6e"/></svg>
<div class="t" style="left:38.3px;top:303.5px;font-size:11px;font-weight:bold;letter-spacing:-0.06px;">Call Tree</div>
<div style="left:20px;top:416.5px;width:213.5px;height:17px;background:linear-gradient(#e7eaf3 0%,#e4e7f1 50%,#cbd0de 54%,#d6dae6 100%);border-top:1px solid #b9b9bd;border-bottom:1px solid #b0b0b4;box-sizing:border-box;"></div>
<svg style="left:24px;top:420.5px;" width="9" height="10" viewBox="0 0 9 10"><path d="M0.5 0.5 L0.5 9.5 L8.5 5 Z" fill="#6e6e6e"/></svg>
<div class="t" style="left:38.3px;top:419.5px;font-size:11px;font-weight:bold;letter-spacing:-0.1px;">Call Tree Constraints</div>
<div style="left:23px;top:269.5px;width:11px;height:11px;border-radius:50%;border:1px solid #555;box-sizing:border-box;background:linear-gradient(#fff,#e4e4e4);"></div>
<div style="left:26.5px;top:273px;width:4px;height:4px;border-radius:50%;background:#111;"></div>
<div class="t" style="left:37.3px;top:269.5px;font-size:11px;letter-spacing:-0.15px;">All Objects Created</div>
<div style="left:23px;top:285.5px;width:11px;height:11px;border-radius:50%;border:1px solid #555;box-sizing:border-box;background:linear-gradient(#fff,#e4e4e4);"></div>
<div class="t" style="left:37.3px;top:285.5px;font-size:11px;letter-spacing:-0.11px;">Created &amp; Still Living</div>
<div style="left:24px;top:321.5px;width:9.5px;height:9.5px;border-radius:2px;border:1px solid #b4b4b4;box-sizing:border-box;background:linear-gradient(#fbfbfb,#ececec);"></div>
<div class="t" style="left:37.3px;top:321.5px;font-size:11px;color:#848484;letter-spacing:-0.2px;">Separate by Thread</div>
<div style="left:24px;top:337.5px;width:9.5px;height:9.5px;border-radius:2px;border:1px solid #b4b4b4;box-sizing:border-box;background:linear-gradient(#fbfbfb,#ececec);"></div>
<div class="t" style="left:37.3px;top:337.5px;font-size:11px;color:#848484;letter-spacing:-0.1px;">Invert Call Tree</div>
<div style="left:24px;top:353.5px;width:9.5px;height:9.5px;border-radius:2px;border:1px solid #b4b4b4;box-sizing:border-box;background:linear-gradient(#fbfbfb,#ececec);"></div>
<svg style="left:23px;top:350px;" width="14" height="14" viewBox="0 0 14 14"><path d="M3 7.6 L5.4 11 L10.4 2.4" fill="none" stroke="#777" stroke-width="1.5"/></svg>
<div class="t" style="left:37.3px;top:353.5px;font-size:11px;color:#848484;letter-spacing:-0.175px;">Hide Missing Symbols</div>
<div style="left:24px;top:369.5px;width:9.5px;height:9.5px;border-radius:2px;border:1px solid #b4b4b4;box-sizing:border-box;background:linear-gradient(#fbfbfb,#ececec);"></div>
<div class="t" style="left:37.3px;top:369.5px;font-size:11px;color:#848484;letter-spacing:-0.18px;">Hide System Libraries</div>
<div style="left:24px;top:385.5px;width:9.5px;height:9.5px;border-radius:2px;border:1px solid #b4b4b4;box-sizing:border-box;background:linear-gradient(#fbfbfb,#ececec);"></div>
<div class="t" style="left:37.3px;top:385.5px;font-size:11px;color:#848484;letter-spacing:-0.13px;">Show Obj-C Only</div>
<div style="left:24px;top:401.5px;width:9.5px;height:9.5px;border-radius:2px;border:1px solid #b4b4b4;box-sizing:border-box;background:linear-gradient(#fbfbfb,#ececec);"></div>
<div class="t" style="left:37.3px;top:401.5px;font-size:11px;color:#848484;letter-spacing:-0.19px;">Flatten Recursion</div>
  <!-- bottom bar -->
  <div style="left:20px;top:448px;width:1086px;height:25px;background:linear-gradient(#fefefe 0%,#f6f6f6 45%,#e9e9e9 50%,#e7e7e7 100%);"></div>
  <div style="left:20px;top:448px;width:1086px;height:1px;background:#9c9c9c;"></div>
<div style="left:51px;top:449px;width:1px;height:24px;background:#b0b0b0;"></div>
<div style="left:83px;top:449px;width:1px;height:24px;background:#b0b0b0;"></div>
<div style="left:115px;top:449px;width:1px;height:24px;background:#b0b0b0;"></div>

<div style="left:264px;top:449px;width:1px;height:24px;background:#b0b0b0;"></div>
<div style="left:296px;top:449px;width:1px;height:24px;background:#b0b0b0;"></div>
<div style="left:328px;top:449px;width:1px;height:24px;background:#b0b0b0;"></div>
<div style="left:360px;top:449px;width:1px;height:24px;background:#b0b0b0;"></div>
  <div class="t" style="left:367.4px;top:454.5px;font-size:12.5px;letter-spacing:0.15px;">Object Summary</div>
  <svg style="left:468px;top:448px;" width="12" height="25" viewBox="0 0 12 25"><path d="M2.5 0.5 L10 12.5 L2.5 24.5" fill="none" stroke="#ababab" stroke-width="1"/></svg>
  <div style="left:678px;top:451px;width:201px;height:19px;border-radius:10px;border:1px solid #8e8e8e;border-top-color:#6e6e6e;border-bottom-color:#b4b4b4;box-sizing:border-box;background:#fff;box-shadow:inset 0 1px 2px rgba(0,0,0,.2);"></div>
  <svg style="left:682px;top:455px;" width="16" height="12" viewBox="0 0 16 12"><circle cx="4.6" cy="4.6" r="3.3" fill="none" stroke="#6a6a6a" stroke-width="1.5"/><path d="M7 7.2 L10 10.6" stroke="#6a6a6a" stroke-width="1.8"/><path d="M10.6 5 L14.2 5 L12.4 7.2 Z" fill="#6a6a6a"/></svg>
  <div class="t" style="left:699.6px;top:455.5px;font-size:11px;color:#9a9a9a;letter-spacing:0.26px;">Category</div>
<div style="left:896px;top:454px;width:1px;height:12px;background:#6a6a6a;"></div>
<div style="left:899.5px;top:454px;width:1px;height:12px;background:#6a6a6a;"></div>
<div style="left:903px;top:454px;width:1px;height:12px;background:#6a6a6a;"></div>
  <!-- bottom icons -->
  <svg style="left:0;top:446px;" width="480" height="30" viewBox="0 446 480 30">
    <path d="M36.40 460.90L39.60 460.90M35.64 462.74L37.90 465.00M33.80 463.50L33.80 466.70M31.96 462.74L29.70 465.00M31.20 460.90L28.00 460.90M31.96 459.06L29.70 456.80M33.80 458.30L33.80 455.10M35.64 459.06L37.90 456.80" stroke="#555" stroke-width="2.1" fill="none"/><circle cx="33.8" cy="460.9" r="3.1" fill="none" stroke="#555" stroke-width="1.9"/>
    <path d="M41.8 459.8 L45.4 459.8 L43.6 462.4 Z" fill="#666"/>
    <g fill="#555"><path d="M60 455 L64.6 455 L60 459.6 Z"/><path d="M76 455 L71.4 455 L76 459.6 Z"/><path d="M60 467 L64.6 467 L60 462.4 Z"/><path d="M76 467 L71.4 467 L76 462.4 Z"/><rect x="63.8" y="457.8" width="8.6" height="6.4" rx="2.4"/></g>
    <rect x="94" y="457" width="12" height="8" fill="#e8ecf2" stroke="#3b7fe0" stroke-width="2"/>
    <path d="M97 459.3 L103 459.3 L100 462.8 Z" fill="#2f7bf0"/>
    <rect x="242" y="456.3" width="14" height="9.6" fill="#3d82e2"/>
    <g fill="#fff"><rect x="243.8" y="458.2" width="4.4" height="1.5"/><rect x="249.6" y="458.2" width="4.6" height="1.5"/><rect x="243.8" y="461.8" width="4.4" height="1.5"/><rect x="249.6" y="461.8" width="4.6" height="1.5"/></g>
    <g fill="#555"><rect x="274.2" y="456.4" width="11.8" height="1.6"/><rect x="275.4" y="460.2" width="11.6" height="1.6"/><rect x="276.2" y="464" width="11.8" height="1.6"/></g>
    <g fill="#5a5a5a"><rect x="306.2" y="456.3" width="5.4" height="3.6"/><rect x="314.6" y="456.3" width="5.4" height="3.6"/><rect x="306.2" y="462.3" width="5.4" height="3.6"/><rect x="314.6" y="462.3" width="5.4" height="3.6"/><rect x="311" y="457.6" width="4" height="1.1"/><rect x="311" y="463.6" width="4" height="1.1"/><rect x="308.4" y="459.5" width="1.1" height="3.2"/><rect x="316.8" y="459.5" width="1.1" height="3.2"/></g>
    <rect x="338.9" y="457.1" width="12.2" height="8" fill="#eef0f4" stroke="#3b7fe0" stroke-width="1.8"/>
    <rect x="346.2" y="458" width="4" height="6.2" fill="#6a9ee8"/>
  </svg>
  <!-- app icon in popup -->
  <svg style="left:142px;top:43px;" width="16" height="16" viewBox="142 43 16 16">
    <rect x="142.7" y="43.3" width="14.9" height="14.9" rx="2" fill="#e2e2e2"/>
    <path d="M143.6 51 L156.2 51.6" stroke="#e8c88c" stroke-width="1.8"/>
    <path d="M145 56.2 L150.6 46" stroke="#e4b878" stroke-width="1.6"/>
    <path d="M149.4 45.4 L155 54.6" stroke="#b07848" stroke-width="1.5"/>
    <circle cx="148.6" cy="47.4" r="0.9" fill="#f04890"/>
    <path d="M155 54.6 L155.6 56.4" stroke="#d8b070" stroke-width="1.4"/>
  </svg>
  <!-- resize grip -->
  <svg style="left:1093px;top:460px;" width="13" height="13" viewBox="0 0 13 13"><path d="M12 1.5 L1.5 12 M12 5.5 L5.5 12 M12 9.5 L9.5 12" stroke="#9a9a9a" stroke-width="1"/></svg>
  <div style="left:233px;top:86px;width:1px;height:139px;background:#9a9a9a;"></div><div style="left:233px;top:234px;width:1px;height:239px;background:#9a9a9a;"></div>
  <div style="left:890px;top:86px;width:1px;height:387px;background:#9a9a9a;"></div>
</div></div>
</body>
</html>
